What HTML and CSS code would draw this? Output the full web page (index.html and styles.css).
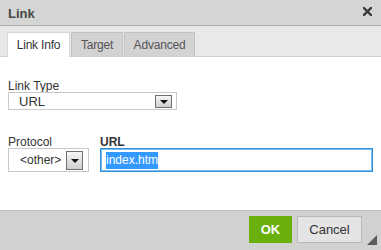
FILE: index.html
```html
<!DOCTYPE html>
<html lang="en">
<head>
  <meta charset="UTF-8">
  <title>Link</title>
  <link rel="stylesheet" href="styles.css">
</head>
<body>
  <div class="dialog">
    <!-- Title bar -->
    <div class="titlebar">
      <span class="title">Link</span>
      <span class="close">
        <svg width="9" height="9" viewBox="0 0 9 9"><path d="M1 1 L8 8 M8 1 L1 8" stroke="#3a3a3a" stroke-width="2.4" stroke-linecap="square"/></svg>
      </span>
    </div>

    <!-- Tabs -->
    <div class="tabs">
      <a href="#" class="tab tab-info active">Link Info</a>
      <a href="#" class="tab tab-target">Target</a>
      <a href="#" class="tab tab-adv">Advanced</a>
    </div>

    <!-- Content -->
    <div class="content">
      <div class="field">
        <label class="label">Link Type</label>
        <div class="select select-type">
          <span class="select-text">URL</span>
          <span class="drop"><i></i></span>
        </div>
      </div>

      <div class="row">
        <div class="field">
          <label class="label">Protocol</label>
          <div class="select select-proto">
            <span class="select-text">&lt;other&gt;</span>
            <span class="drop"><i></i></span>
          </div>
        </div>
        <div class="field field-url">
          <label class="label bold">URL</label>
          <div class="input"><span class="selected">index.htm</span></div>
        </div>
      </div>
    </div>

    <!-- Footer -->
    <div class="footer">
      <a href="#" class="btn btn-ok">OK</a>
      <a href="#" class="btn btn-cancel">Cancel</a>
      <span class="grip"></span>
    </div>
  </div>
</body>
</html>
```

FILE: styles.css
```css
:root {
  --title-bg: #d4d6d3;
  --strip-bg: #e9e9e9;
  --footer-bg: #d0d2cf;
  --text: #333;
  --border: #c6c6c6;
}
body {
  margin: 0;
  font-family: 'Liberation Sans', Arial, sans-serif;
  font-size: 12px;
  color: var(--text);
}
.dialog {
  width: 381px;
  height: 250px;
  display: flex;
  flex-direction: column;
  background: #fff;
}
/* Title bar */
.titlebar {
  height: 25px;
  background: var(--title-bg);
  border-bottom: 1px solid #a9aba8;
  display: flex;
  align-items: center;
  justify-content: space-between;
  padding: 0 9px 0 8px;
}
.title {
  font-size: 13px;
  font-weight: 700;
  color: #474747;
  margin-top: 1px;
}
.close {
  display: flex;
  margin-top: -2px;
}
/* Tabs */
.tabs {
  height: 30px;
  background: var(--strip-bg);
  border-bottom: 1px solid #d1d1d1;
  display: flex;
  align-items: flex-end;
  padding-left: 7px;
}
.tab {
  height: 24px;
  line-height: 24px;
  box-sizing: border-box;
  text-align: center;
  text-decoration: none;
  color: #555;
  font-size: 12px;
  letter-spacing: -0.2px;
  background: #d3d3d3;
  border: 1px solid #c2c2c2;
  border-bottom: none;
  margin-right: 1px;
}
.tab-info { width: 63px; }
.tab-target { width: 52px; }
.tab-adv { width: 71px; }
.tab.active {
  background: #fff;
  color: #333;
  height: 25px;
  margin-bottom: -1px;
  border-color: #d6d6d6;
}
/* Content */
.content {
  flex: 1;
  padding: 23px 8px 0 8px;
}
.field {
  display: flex;
  flex-direction: column;
}
.label {
  line-height: 12px;
  height: 12px;
  color: #333;
}
.label.bold {
  font-weight: 700;
}
.select {
  display: flex;
  align-items: center;
  justify-content: space-between;
  border: 1px solid #c9c9c9;
  background: #fff;
  box-sizing: border-box;
}
.select-type {
  width: 169px;
  height: 18px;
  padding: 0 4px 0 10px;
  font-size: 13px;
}
.select-type .drop {
  height: 13px;
}
.select-proto {
  width: 81px;
  height: 24px;
  padding: 0 5px 0 11px;
}
.select-proto .drop {
  height: 19px;
}
.drop {
  width: 17px;
  box-sizing: border-box;
  border: 1px solid #6f6f6f;
  background: linear-gradient(#f6f6f6, #cfcfcf);
  display: flex;
  align-items: center;
  justify-content: center;
}
.drop i {
  width: 0;
  height: 0;
  border-left: 4px solid transparent;
  border-right: 4px solid transparent;
  border-top: 4px solid #111;
  margin-top: 2px;
}
.row {
  display: flex;
  gap: 11px;
  margin-top: 26px;
}
.field-url {
  flex: 1;
}
.input {
  height: 24px;
  box-sizing: border-box;
  border: 1px solid #2e8fdb;
  box-shadow: inset 0 0 0 1px #7fbbe8;
  display: flex;
  align-items: center;
  padding-left: 5px;
}
.selected {
  background: #3399ff;
  color: #fff;
  line-height: 17px;
}
/* Footer */
.footer {
  height: 34px;
  background: var(--footer-bg);
  border-top: 1px solid #bdbfbc;
  display: flex;
  justify-content: flex-end;
  align-items: flex-start;
  padding: 5px 4px 0 0;
}
.btn {
  height: 27px;
  line-height: 27px;
  box-sizing: border-box;
  font-size: 13px;
  text-decoration: none;
  text-align: center;
}
.btn-ok {
  width: 43px;
  background: #69b00d;
  color: #fff;
  font-weight: 700;
}
.btn-cancel {
  width: 65px;
  margin-left: 5px;
  background: #e4e4e4;
  border: 1px solid #b9b9b9;
  line-height: 25px;
  color: #333;
}
.grip {
  align-self: flex-end;
  width: 0;
  height: 0;
  border-left: 10px solid transparent;
  border-bottom: 10px solid #5b5b5b;
  margin: 0 0 5px 5px;
}
```
